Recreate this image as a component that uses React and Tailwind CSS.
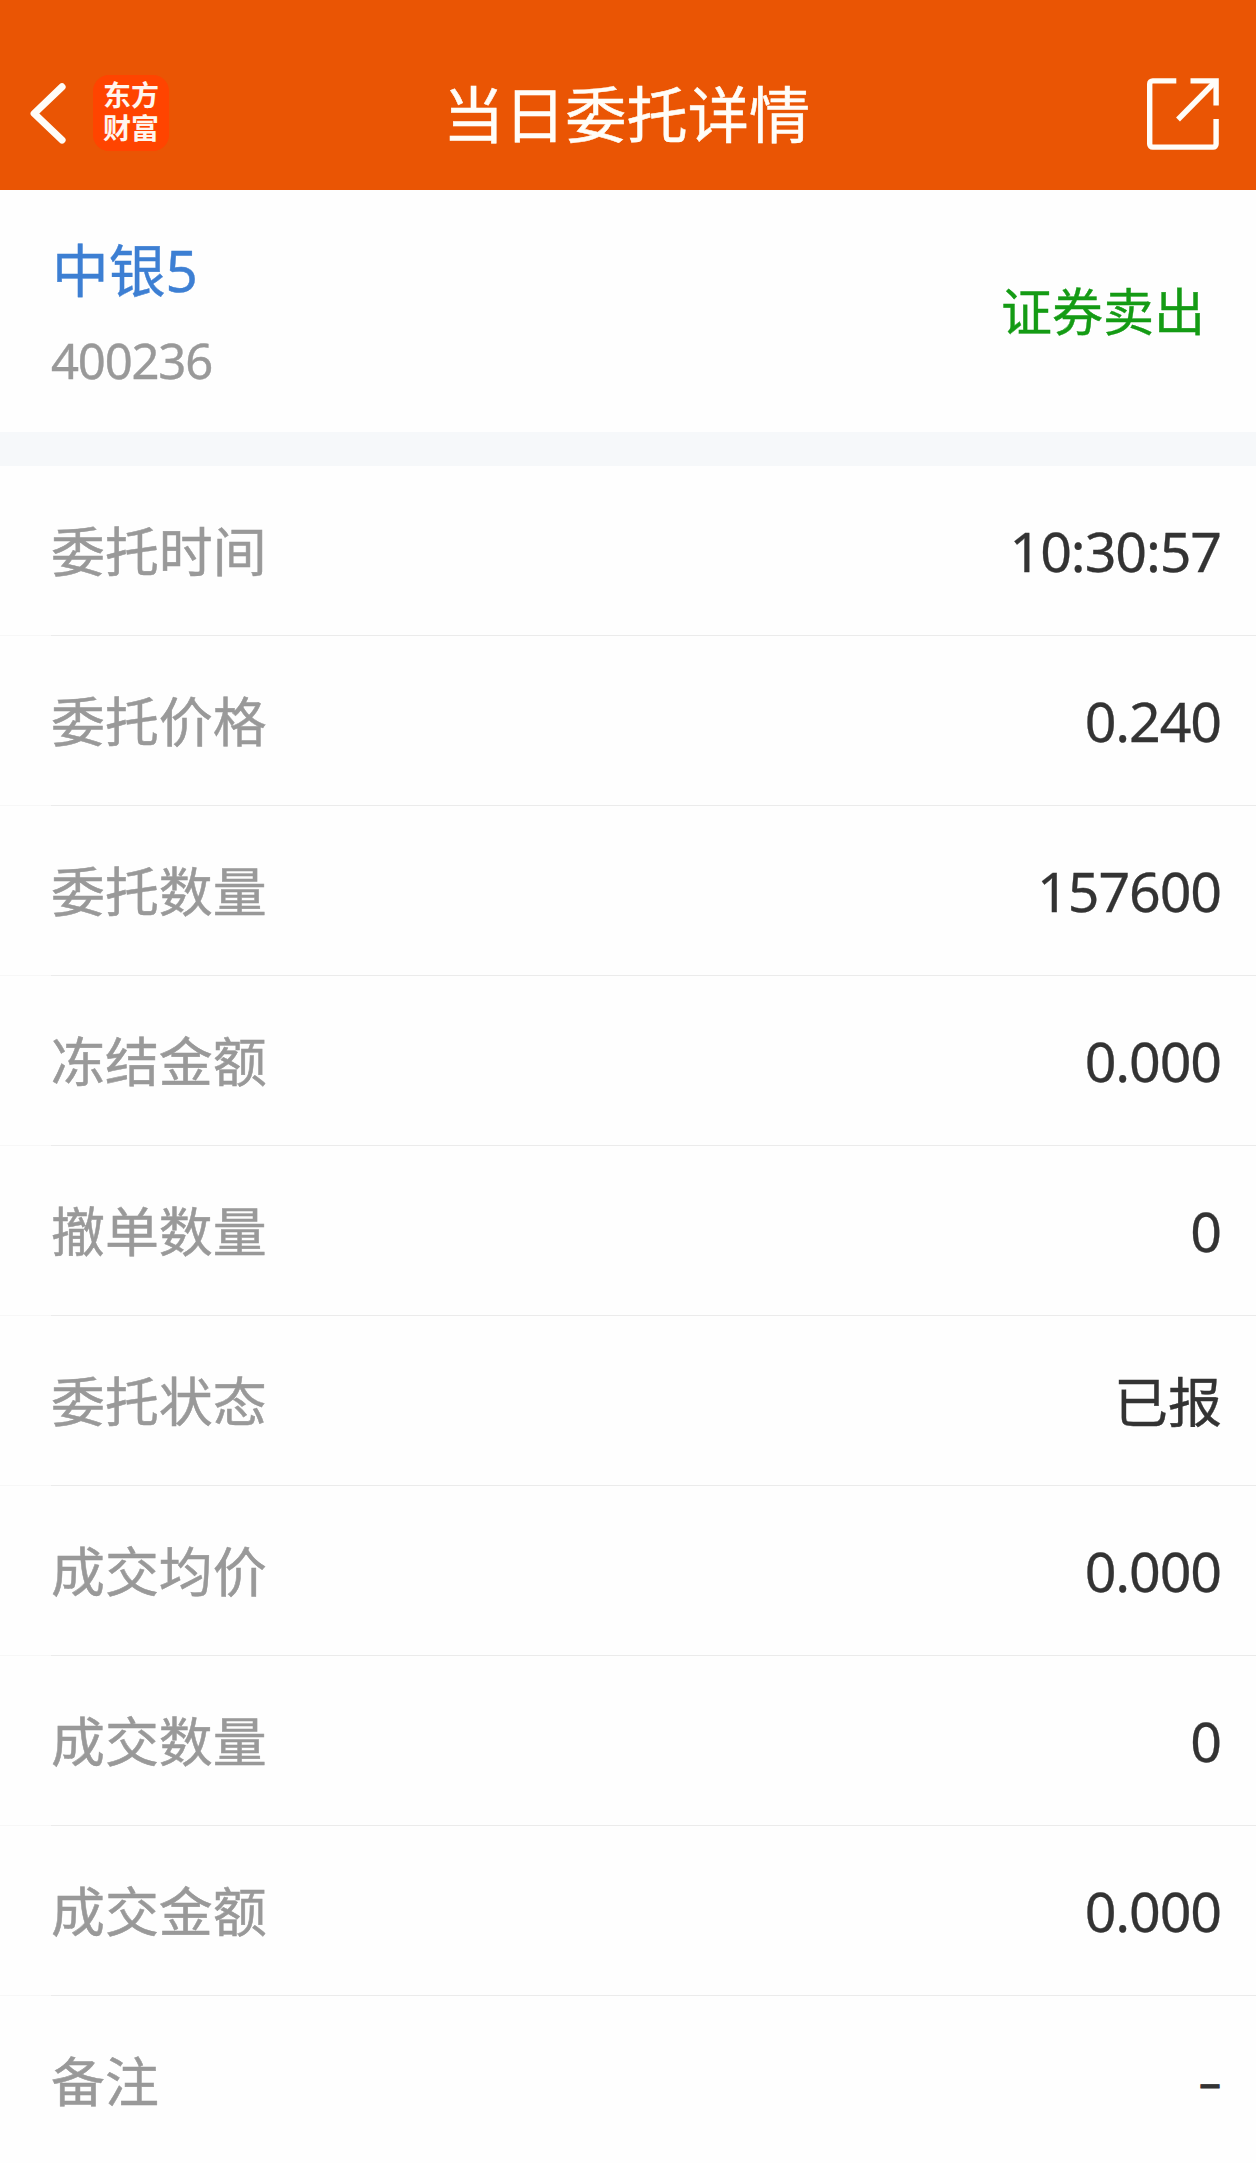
import React from "react";

const rows = [
  { label: "委托时间", value: "10:30:57" },
  { label: "委托价格", value: "0.240" },
  { label: "委托数量", value: "157600" },
  { label: "冻结金额", value: "0.000" },
  { label: "撤单数量", value: "0" },
  { label: "委托状态", value: "已报", type: "text" },
  { label: "成交均价", value: "0.000" },
  { label: "成交数量", value: "0" },
  { label: "成交金额", value: "0.000" },
  { label: "备注", value: "–", type: "empty" },
];

const valueStyles = {
  number: "text-[55.5px] tracking-[-1.1px] pr-px pb-[2px] [-webkit-text-stroke:0.3px]",
  text: "text-[54px] [-webkit-text-stroke:0.4px]",
  empty: "text-[44px] pb-[2px] pr-px [-webkit-text-stroke:0.8px]",
};

const BackIcon = () => (
  <svg width="36" height="62" viewBox="0 0 36 62" fill="none" stroke="#fffdf8" strokeWidth="7.2" strokeLinecap="round" strokeLinejoin="round">
    <path d="M32 4.9 4.2 31.5 32 58" />
  </svg>
);

const ShareIcon = () => (
  <svg width="72" height="72" viewBox="0 0 72 72" fill="none" stroke="#fffdf8" strokeWidth="5.4">
    <path d="M29.3 2.9H5.7a3 3 0 0 0-3 3v60.2a3 3 0 0 0 3 3h60.4a3 3 0 0 0 3-3V41" />
    <path d="M43.5 2.9h25.6v24.6" />
    <path d="M31 41.5 68.5 3.5" />
  </svg>
);

const Logo = () => (
  <div className="flex h-[76px] w-[76px] flex-col items-center justify-center rounded-[16px] bg-[#ff4400] font-['Liberation_Sans','Noto_Sans_CJK_SC',sans-serif] text-[28px] font-bold leading-[33px] text-[#fff6ee]">
    <span>东方</span>
    <span>财富</span>
  </div>
);

const Header = () => (
  <header className="flex h-[190px] shrink-0 items-start justify-between bg-[#ea5504] pl-[30px] pr-[37px] pt-[75px]">
    <div className="flex w-[302px] items-center gap-[27px]">
      <BackIcon />
      <Logo />
    </div>
    <h1 className="text-[61.2px] leading-[80px] text-[#fffdf8] [-webkit-text-stroke:0.5px]">当日委托详情</h1>
    <div className="flex w-[298px] justify-end pt-[3px]">
      <ShareIcon />
    </div>
  </header>
);

const Row = ({ label, value, type = "number" }) => (
  <div className="h-[170px] shrink-0">
    <div className="flex h-[169px] items-center justify-between pl-[51px] pr-[34px] pt-[2px]">
      <span className="pb-[2px] text-[53.9px] leading-[80px] text-[#999999] [-webkit-text-stroke:0.5px]">{label}</span>
      <span className={`leading-[80px] text-[#333333] ${valueStyles[type]}`}>{value}</span>
    </div>
    <div className="flex h-px">
      <div className="w-[51px] bg-[#f7f7f7]" />
      <div className="flex-1 bg-[#ebebeb]" />
    </div>
  </div>
);

export default function App() {
  return (
    <div className="flex h-[2163px] w-[1256px] flex-col overflow-hidden bg-[#fefefe] font-['Noto_Sans','Noto_Sans_CJK_SC',sans-serif]">
      <Header />
      <section className="flex h-[242px] shrink-0 items-center justify-between pl-[51px] pr-[51px]">
        <div className="flex flex-col pt-[8px]">
          <span className="pl-px text-[56.7px] leading-[90px] text-[#3d7fd3] [-webkit-text-stroke:0.4px]">中银5</span>
          <span className="text-[49px] leading-[90px] tracking-[-1.2px] text-[#999999] [-webkit-text-stroke:0.4px]">400236</span>
        </div>
        <span className="text-[51px] leading-[80px] text-[#149b14] [-webkit-text-stroke:0.4px]">证券卖出</span>
      </section>
      <div className="h-[34px] shrink-0 bg-[#f6f8fa]" />
      {rows.map((row) => (
        <Row key={row.label} label={row.label} value={row.value} type={row.type} />
      ))}
    </div>
  );
}
